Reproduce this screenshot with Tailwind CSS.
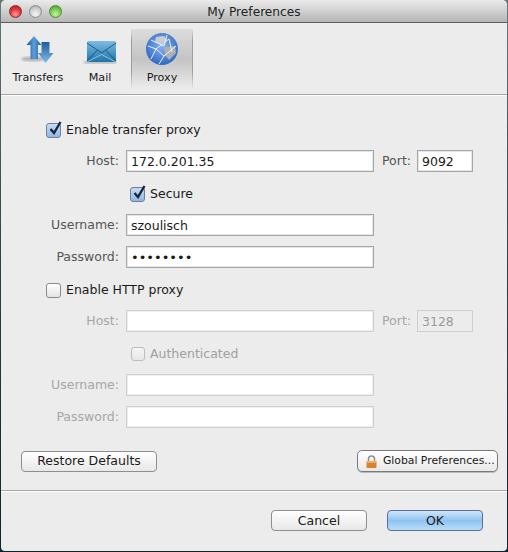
<!DOCTYPE html>
<html lang="en">
<head>
  <meta charset="UTF-8" />
  <title>My Preferences</title>
  <script src="https://cdn.jsdelivr.net/npm/@tailwindcss/browser@4"></script>
</head>
<body class="h-[552px] w-[508px] overflow-hidden bg-linear-to-b from-[#66787a] via-[#2a4044] to-[#0a262c] font-['DejaVu_Sans',sans-serif] text-[12.5px] text-[#1a1a1a]">
  <div class="mx-px flex h-[551px] flex-col overflow-hidden rounded-t-[5px] rounded-b-[4px] bg-[#ececec]">
    <!-- Title bar -->
    <div class="relative flex h-[23px] shrink-0 items-center border-b border-[#5c5c5c] bg-linear-to-b from-[#ebebeb] to-[#b6b6b6] pl-[8px] pt-[1px]">
      <div class="flex gap-[7px]">
        <span class="size-[13px] rounded-full border border-[#8a2a2a] bg-[radial-gradient(circle_at_50%_75%,#ff9a9a,#e0343a_55%,#a81c20)]"></span>
        <span class="size-[13px] rounded-full border border-[#8c8c8c] bg-[radial-gradient(circle_at_50%_75%,#f4f4f4,#d0d0d0_55%,#a0a0a0)]"></span>
        <span class="size-[13px] rounded-full border border-[#4f8a3a] bg-[radial-gradient(circle_at_50%_75%,#c8f49a,#78c850_55%,#3f962c)]"></span>
      </div>
      <div class="absolute inset-x-0 pt-[1px] text-center text-[12.2px] text-[#222]">My Preferences</div>
    </div>

    <!-- Toolbar -->
    <div class="flex h-[72px] shrink-0 border-b border-[#a4a4a4] bg-[#ececec] pl-[6px]">
      <div class="mt-[6px] flex h-[60px] w-[62px] flex-col items-center">
        <svg class="mt-[6px] h-[28px] w-[40px]" viewBox="0 0 40 28">
          <defs>
            <linearGradient id="up" x1="0" y1="0" x2="1" y2="0"><stop offset="0" stop-color="#0f4f94"/><stop offset=".5" stop-color="#5f9fd8"/><stop offset="1" stop-color="#1a5ea6"/></linearGradient>
            <linearGradient id="down" x1="0" y1="0" x2="0" y2="1"><stop offset="0" stop-color="#1b5d9f"/><stop offset="1" stop-color="#84bbe8"/></linearGradient>
            <filter id="blur"><feGaussianBlur stdDeviation="1.3"/></filter>
          </defs>
          <ellipse cx="15" cy="24" rx="12" ry="2.500" fill="#8c8c8c" opacity=".6" filter="url(#blur)"/>
          <path d="M16 1 L23.500 10 H20 V24 H12.500 V10 H8.500 Z" fill="url(#up)"/>
          <path d="M23.500 7 H31.500 V18 H35.500 L27.500 28 L20 18 H23.500 Z" fill="url(#down)"/>
        </svg>
        <span class="mt-[7px] text-[11.2px]">Transfers</span>
      </div>
      <div class="mt-[6px] flex h-[60px] w-[62px] flex-col items-center">
        <svg class="mt-[12px] h-[23px] w-[34px]" viewBox="0 0 34 23">
          <defs>
            <linearGradient id="mail" x1="0" y1="0" x2="0" y2="1"><stop offset="0" stop-color="#7cbde4"/><stop offset="1" stop-color="#1f73a8"/></linearGradient>
          </defs>
          <rect x="1" y="20" width="32" height="3" fill="#a8a8a8" opacity=".7" filter="url(#blur)"/>
          <rect x="4" y="0" width="29" height="21" rx="1.500" fill="url(#mail)"/>
          <path d="M4 2 L18.500 12 L33 2 M4 20 L14 9.500 M33 20 L23 9.500" fill="none" stroke="#1a5a8a" stroke-width="1"/>
          <path d="M5 20.500 L18.500 13.500 L32 20.500" fill="none" stroke="#9ad0ec" stroke-width=".8"/>
        </svg>
        <span class="mt-[6px] text-[11.2px]">Mail</span>
      </div>
      <div class="mt-[6px] flex h-[60px] w-[62px] flex-col items-center border-x border-[#a0a0a0] bg-linear-to-b from-[#dcdcdc] via-[#c4c4c4] to-[#ececec] [border-image:linear-gradient(to_bottom,#ececec,#9c9c9c_20%,#9c9c9c_70%,#ececec)_1]">
        <svg class="mt-[3px] h-[34px] w-[34px]" viewBox="0 0 34 34">
          <defs>
            <radialGradient id="globe" cx=".5" cy=".4" r=".6"><stop offset="0" stop-color="#8cb4ec"/><stop offset="1" stop-color="#2f68c4"/></radialGradient>
          </defs>
          <circle cx="17" cy="17" r="16" fill="url(#globe)"/>
          <path d="M11 5 L19 4 L22 8 L16 12 L10 10 Z" fill="#c9cdd2"/>
          <path d="M19 15 L30 14 L31 21 L24 28 L20 23 Z" fill="#aeb0b2"/>
          <path d="M3 14 L11 17 L24 7 M11 17 L19 24 L31 14 M19 24 L14 32 M11 17 L6 27 M24 7 L27 20 M6 8 L19 14 L22 3" fill="none" stroke="#e8f2ff" stroke-width="1"/>
        </svg>
        <span class="mt-[4px] text-[11.2px]">Proxy</span>
      </div>
    </div>

    <!-- Form -->
    <div class="flex flex-1 flex-col border-t border-white">
      <div class="mt-[26px] flex h-[16px] items-center pl-[45px]">
        <span class="relative size-[15px] rounded-[3px] border border-[#6f7f96] bg-linear-to-b from-[#c6dcf4] to-[#8fb8e2]">
          <svg class="absolute left-[1px] top-[-4px] size-[15px]" viewBox="0 0 15 15"><path d="M2.500 9 L6 13 L12.500 2" fill="none" stroke="#14243a" stroke-width="2.300"/></svg>
        </span>
        <span class="ml-[5px] pt-px">Enable transfer proxy</span>
      </div>

      <div class="mt-[12px] flex h-[22px] items-center">
        <label class="w-[118px] text-right text-[#555]">Host:</label>
        <input readonly value="172.0.201.35" class="ml-[7px] h-[22px] w-[248px] border border-[#a6a6a6] bg-white px-[4px] shadow-[inset_0_0_0_1px_#e6e6e6] outline-none" />
        <label class="ml-[8px] w-[28px] whitespace-nowrap text-[#555]">Port:</label>
        <input readonly value="9092" class="ml-[7px] h-[22px] w-[56px] border border-[#a6a6a6] bg-white px-[4px] shadow-[inset_0_0_0_1px_#e6e6e6] outline-none" />
      </div>

      <div class="mt-[14px] flex h-[16px] items-center pl-[129px]">
        <span class="relative size-[15px] rounded-[3px] border border-[#6f7f96] bg-linear-to-b from-[#c6dcf4] to-[#8fb8e2]">
          <svg class="absolute left-[1px] top-[-4px] size-[15px]" viewBox="0 0 15 15"><path d="M2.500 9 L6 13 L12.500 2" fill="none" stroke="#14243a" stroke-width="2.300"/></svg>
        </span>
        <span class="ml-[5px] pt-px">Secure</span>
      </div>

      <div class="mt-[12px] flex h-[22px] items-center">
        <label class="w-[118px] text-right text-[#555]">Username:</label>
        <input readonly value="szoulisch" class="ml-[7px] h-[22px] w-[248px] border border-[#a6a6a6] bg-white px-[4px] shadow-[inset_0_0_0_1px_#e6e6e6] outline-none" />
      </div>

      <div class="mt-[10px] flex h-[22px] items-center">
        <label class="w-[118px] text-right text-[#555]">Password:</label>
        <input readonly type="password" value="szoulisc" class="ml-[7px] h-[22px] w-[248px] border border-[#a6a6a6] bg-white px-[4px] text-[13px] shadow-[inset_0_0_0_1px_#e6e6e6] outline-none" />
      </div>

      <div class="mt-[14px] flex h-[16px] items-center pl-[45px]">
        <span class="size-[15px] rounded-[3px] border border-[#8a8a8a] bg-linear-to-b from-white to-[#e4e4e4]"></span>
        <span class="ml-[5px] pt-px">Enable HTTP proxy</span>
      </div>

      <div class="mt-[12px] flex h-[22px] items-center text-[#a6a6a6]">
        <label class="w-[118px] text-right">Host:</label>
        <input readonly class="ml-[7px] h-[22px] w-[248px] border border-[#cfcfcf] bg-white shadow-[inset_0_0_0_1px_#eeeeee] outline-none" />
        <label class="ml-[8px] w-[28px] whitespace-nowrap">Port:</label>
        <input readonly value="3128" class="ml-[7px] h-[22px] w-[56px] border border-[#cfcfcf] bg-[#ececec] px-[4px] text-[#9a9a9a] outline-none" />
      </div>

      <div class="mt-[14px] flex h-[16px] items-center pl-[130px] text-[#a0a0a0]">
        <span class="size-[14px] rounded-[3px] border border-[#bdbdbd] bg-linear-to-b from-[#f6f6f6] to-[#e6e6e6]"></span>
        <span class="ml-[5px] pt-px">Authenticated</span>
      </div>

      <div class="mt-[12px] flex h-[22px] items-center text-[#a6a6a6]">
        <label class="w-[118px] text-right">Username:</label>
        <input readonly class="ml-[7px] h-[22px] w-[248px] border border-[#cfcfcf] bg-white shadow-[inset_0_0_0_1px_#eeeeee] outline-none" />
      </div>

      <div class="mt-[10px] flex h-[22px] items-center text-[#a6a6a6]">
        <label class="w-[118px] text-right">Password:</label>
        <input readonly class="ml-[7px] h-[22px] w-[248px] border border-[#cfcfcf] bg-white shadow-[inset_0_0_0_1px_#eeeeee] outline-none" />
      </div>

      <div class="mt-[22px] flex h-[22px] items-center justify-between pl-[20px] pr-[9px]">
        <button class="h-[21px] w-[136px] rounded-[4px] border border-[#8e8e8e] bg-linear-to-b from-white to-[#e8e8e8]">Restore Defaults</button>
        <button class="flex h-[22px] w-[141px] items-center rounded-[5px] border border-[#7a7a7a] bg-linear-to-b from-white to-[#e8e8e8] pl-[8px] text-[10.8px] shadow-[0_1px_0_#bbb]">
          <svg class="h-[13px] w-[11px]" viewBox="0 0 11 13">
            <path d="M2.500 6 V4 a3 3 0 0 1 6 0 V6" fill="none" stroke="#8f8f8f" stroke-width="1.500"/>
            <rect x="0.500" y="6" width="10" height="7" rx="1" fill="#d9812b"/>
            <rect x="0.500" y="6" width="10" height="2" fill="#f0b060"/>
          </svg>
          <span class="ml-[6px]">Global Preferences...</span>
        </button>
      </div>

      <div class="mt-[18px] h-[2px] shrink-0 border-t border-[#a4a4a4] bg-white"></div>

      <div class="mt-[18px] flex justify-end gap-[20px] pr-[24px]">
        <button class="h-[21px] w-[96px] rounded-[4px] border border-[#8e8e8e] bg-linear-to-b from-white to-[#e8e8e8] pt-px">Cancel</button>
        <button class="h-[21px] w-[96px] rounded-[4px] border border-[#5a6f9a] bg-linear-to-b from-[#cfe6fa] via-[#8fc2f0] to-[#b8def8] pt-px">OK</button>
      </div>
    </div>
  </div>
</body>
</html>
